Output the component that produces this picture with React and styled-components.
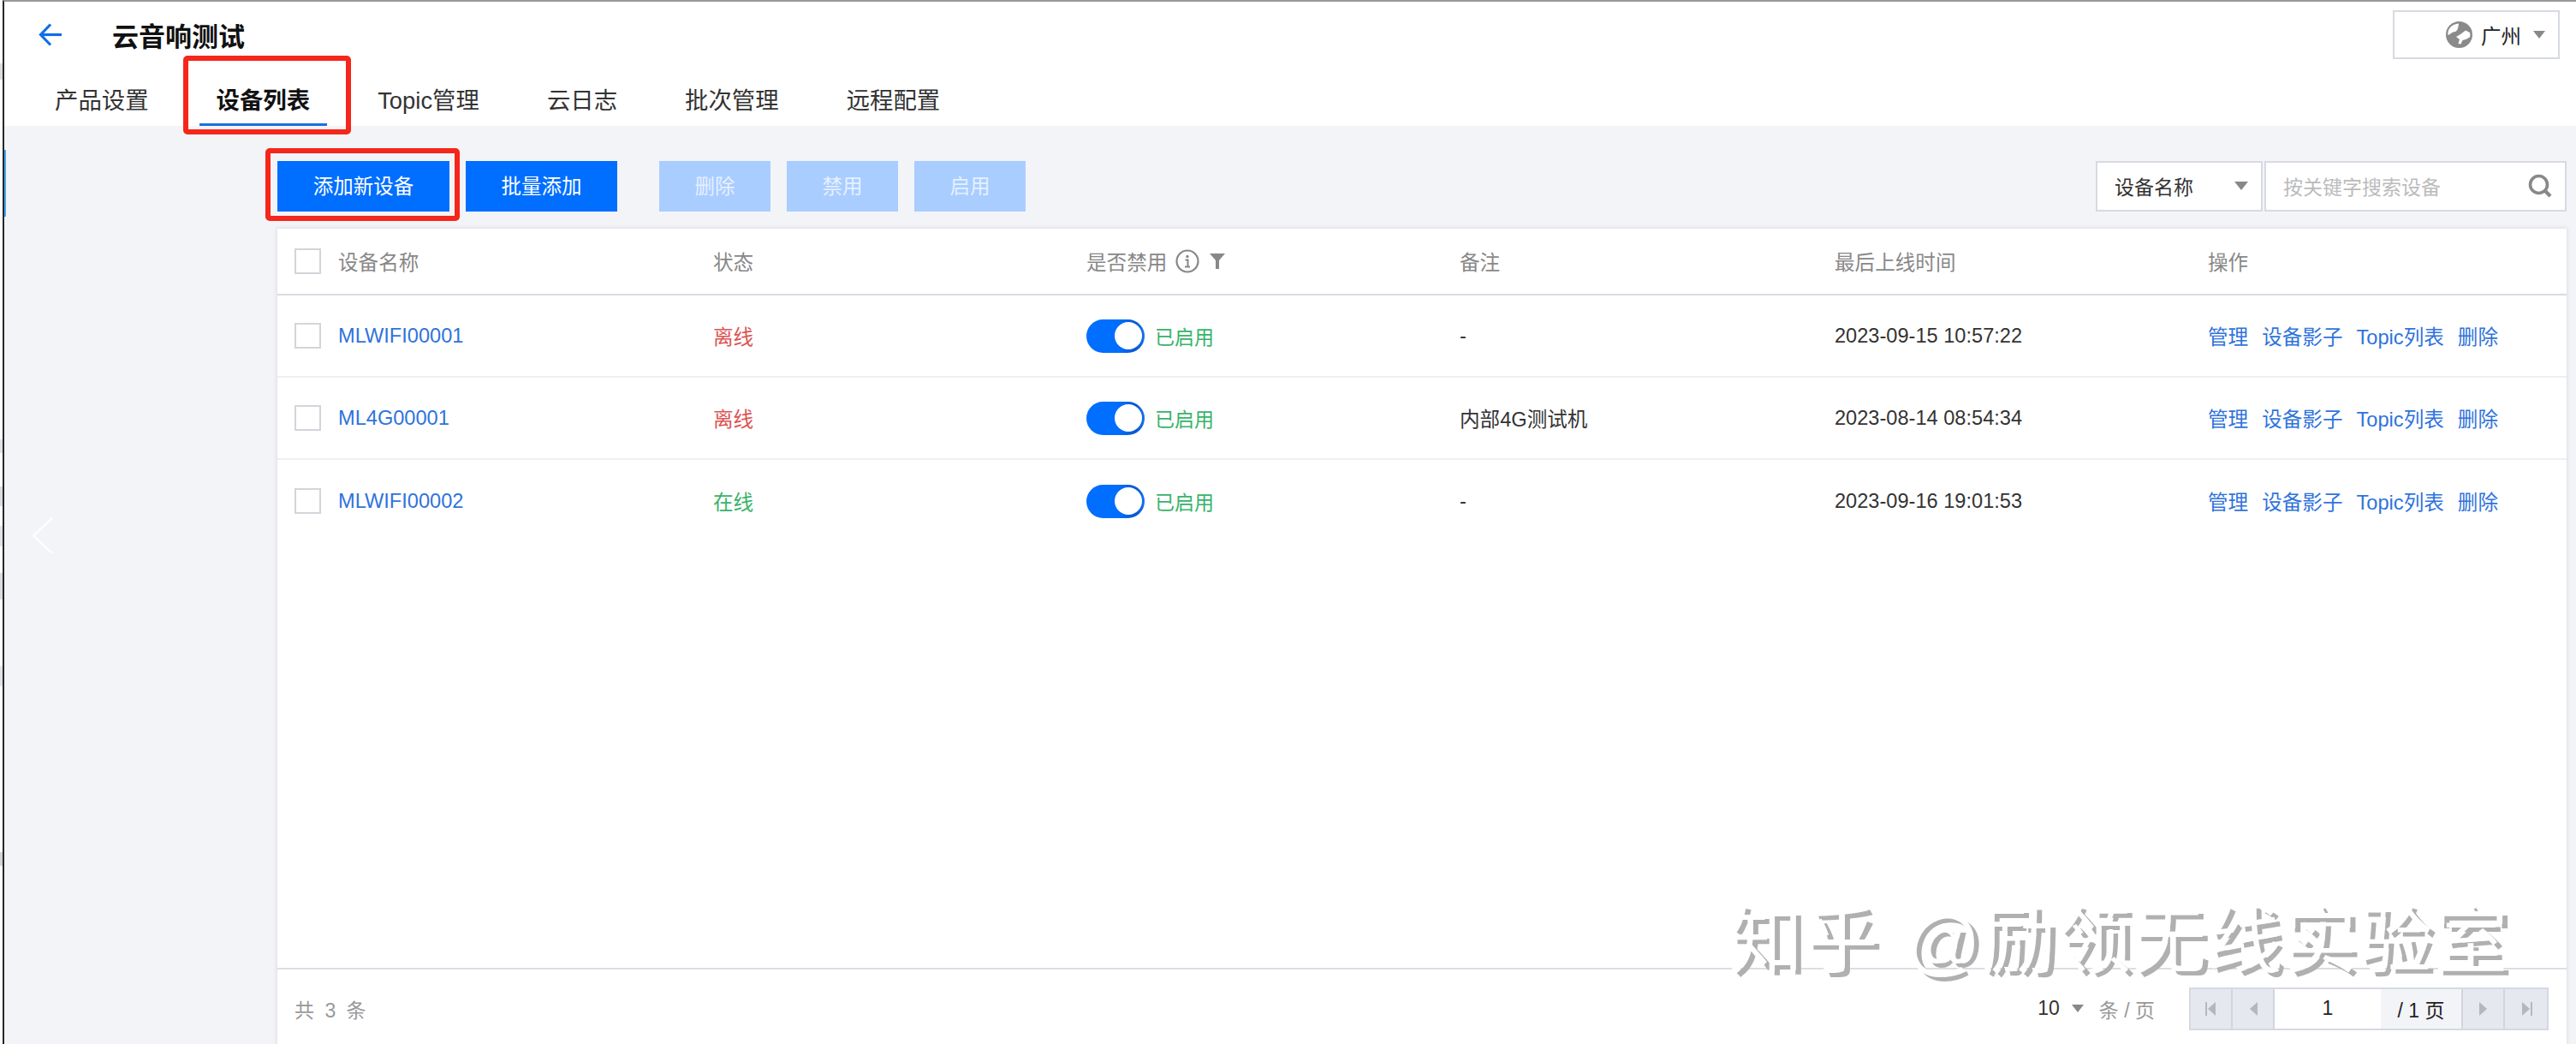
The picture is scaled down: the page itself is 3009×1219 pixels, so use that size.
import React from "react";
import styled, { createGlobalStyle } from "styled-components";

const Global = createGlobalStyle`
  html, body { margin: 0; padding: 0; background: #fff; }
  body { font-family: "Liberation Sans", "Noto Sans CJK SC", sans-serif; color: #222; }
  * { box-sizing: border-box; }
`;

const Page = styled.div`
  position: relative;
  width: 3009px;
  height: 1219px;
  padding-left: 3px;
  overflow: hidden;
  background: linear-gradient(
    180deg,
    #fff 74px, #dcdcdc 74px, #dcdcdc 93px,
    #fff 93px, #fff 513px, #e2e2e2 513px, #e2e2e2 529px,
    #fff 529px, #fff 568px, #dcdcdc 568px, #dcdcdc 591px,
    #fff 591px, #fff 614px, #e2e2e2 614px, #e2e2e2 638px,
    #fff 638px, #fff 669px, #dcdcdc 669px, #dcdcdc 700px,
    #fff 700px, #fff 778px, #e2e2e2 778px, #e2e2e2 801px,
    #fff 801px, #fff 995px, #d4d4d4 995px, #d4d4d4 1011px,
    #fff 1011px
  );
`;
const Frame = styled.div`
  height: 100%;
  display: flex;
  flex-direction: column;
  border-left: 2px solid #26262a;
  border-top: 2px solid #9a9a9a;
  background: #f3f4f8;
`;
const Header = styled.header`
  background: #fff;
  height: 145px;
  display: flex;
  flex-direction: column;
`;
const TopBar = styled.div`
  display: flex;
  align-items: flex-start;
  justify-content: space-between;
  padding: 10px 19px 0 40px;
  height: 82px;
`;
const TitleGroup = styled.div`
  display: flex;
  align-items: center;
  gap: 58px;
  height: 57px;
`;
const Title = styled.h1`
  margin: 6px 0 0;
  font-size: 31px;
  line-height: 40px;
  font-weight: 700;
  color: #111;
`;
const Region = styled.div`
  width: 195px;
  height: 57px;
  border: 2px solid #d7dae1;
  display: flex;
  align-items: center;
  justify-content: flex-end;
  gap: 10px;
  padding-right: 15px;
  font-size: 23.5px;
  color: #222;
`;
const RegionCaret = styled.span`
  width: 0;
  height: 0;
  margin-left: 4px;
  border-left: 7px solid transparent;
  border-right: 7px solid transparent;
  border-top: 9px solid #888;
`;
const Tabs = styled.nav`
  display: flex;
  gap: 39px;
  padding-left: 39px;
  flex: 1;
`;
const Tab = styled.div`
  position: relative;
  padding: 0 20px;
  font-size: 27.4px;
  line-height: 68px;
  white-space: nowrap;
  color: ${(p) => (p.$active ? "#111" : "#333")};
  font-weight: ${(p) => (p.$active ? 700 : 400)};
  border-bottom: 3px solid ${(p) => (p.$active ? "#1a6fe6" : "transparent")};
  height: 63px;
`;
const RedBox = styled.span`
  position: absolute;
  pointer-events: none;
  border: 6px solid #f5261b;
  border-radius: 5px;
`;
const TabMark = styled(RedBox)`
  left: -19px;
  right: -28px;
  top: -19px;
  bottom: -13px;
`;
const Main = styled.main`
  flex: 1;
  min-height: 0;
  display: flex;
  flex-direction: column;
  padding: 41px 11px 0 319px;
`;
const Toolbar = styled.div`
  display: flex;
  justify-content: space-between;
  height: 59px;
  margin-bottom: 20px;
`;
const ButtonRow = styled.div`
  display: flex;
  gap: 19px;
`;
const Button = styled.div`
  position: relative;
  width: ${(p) => p.$w}px;
  height: 59px;
  margin-left: ${(p) => p.$ml || 0}px;
  padding-bottom: 3px;
  display: flex;
  align-items: center;
  justify-content: center;
  font-size: 23.5px;
  background: ${(p) => (p.$disabled ? "#a9cdff" : "#006eff")};
  color: ${(p) => (p.$disabled ? "#e6f0ff" : "#fff")};
`;
const ButtonMark = styled(RedBox)`
  left: -14px;
  right: -12px;
  top: -15px;
  bottom: -11px;
`;
const Search = styled.div`
  display: flex;
  gap: 2px;
`;
const SearchSelect = styled.div`
  width: 195px;
  height: 59px;
  background: #fff;
  border: 2px solid #d7dae1;
  display: flex;
  align-items: center;
  justify-content: space-between;
  padding: 0 15px 2px 20px;
  font-size: 23px;
  color: #333;
`;
const SearchInput = styled.div`
  width: 353px;
  height: 59px;
  background: #fff;
  border: 2px solid #d7dae1;
  display: flex;
  align-items: center;
  justify-content: space-between;
  padding: 0 15px 2px 20px;
  font-size: 23px;
  color: #bbb;
`;
const Caret = styled.span`
  width: 0;
  height: 0;
  border-left: 8px solid transparent;
  border-right: 8px solid transparent;
  border-top: 10px solid #888;
`;
const Card = styled.section`
  flex: 1;
  min-height: 0;
  background: #fff;
  box-shadow: 0 0 4px 1px #dcdde4;
  display: flex;
  flex-direction: column;
`;
const Row = styled.div`
  display: grid;
  grid-template-columns: 489px 436px 436px 438px 436px 1fr;
  align-items: center;
  height: ${(p) => (p.$head ? 78 : 96)}px;
  border-bottom: ${(p) =>
    p.$head ? "2px solid #d9dbe3" : p.$last ? "none" : "2px solid #eeeff3"};
  font-size: 23.6px;
  color: ${(p) => (p.$head ? "#888" : "#333")};
`;
const Cell = styled.div`
  padding-left: 20px;
  display: flex;
  align-items: center;
  white-space: nowrap;
`;
const NameCell = styled(Cell)`
  gap: 20px;
`;
const Check = styled.span`
  width: 31px;
  height: 30px;
  border: 2px solid #d2d5da;
  background: #fff;
`;
const LinkText = styled.span`
  color: #2f73dc;
`;
const Ops = styled(Cell)`
  gap: 16px;
`;
const Status = styled.span`
  color: ${(p) => (p.$on ? "#38b36a" : "#dc5453")};
`;
const Toggle = styled.span`
  width: 68px;
  height: 39px;
  border-radius: 20px;
  background: linear-gradient(90deg, #006eff 55%, #0a58d0 85%, #1672f0);
  display: flex;
  align-items: center;
  justify-content: flex-end;
  padding-right: 3px;
  margin-right: 12px;
`;
const Knob = styled.span`
  width: 32px;
  height: 32px;
  border-radius: 50%;
  background: #fff;
`;
const Enabled = styled.span`
  color: #38b36a;
  font-size: 23px;
`;
const HeadIcons = styled.span`
  display: flex;
  align-items: center;
  margin-left: 10px;
  gap: 12px;
`;
const Body = styled.div`
  flex: 1;
  min-height: 0;
`;
const Footer = styled.footer`
  height: 89px;
  border-top: 2px solid #dcdee4;
  display: flex;
  align-items: center;
  justify-content: space-between;
  padding: 4px 21px 0 20px;
`;
const Total = styled.span`
  font-size: 23px;
  color: #999;
  word-spacing: 6px;
`;
const PagerGroup = styled.div`
  display: flex;
  align-items: center;
`;
const PageSize = styled.div`
  display: flex;
  align-items: center;
  font-size: 23px;
  color: #333;
  margin-right: 40px;
`;
const PageSizeUnit = styled.span`
  color: #999;
  margin-left: 18px;
`;
const PageSizeCaret = styled.span`
  width: 0;
  height: 0;
  margin-left: 14px;
  border-left: 7px solid transparent;
  border-right: 7px solid transparent;
  border-top: 9px solid #888;
`;
const Pager = styled.div`
  display: flex;
  height: 50px;
  border: 2px solid #d6d9e2;
`;
const PagerBtn = styled.div`
  width: 49px;
  background: #e5e8ef;
  border-right: ${(p) => (p.$noBorder ? "none" : "2px solid #d1d5df")};
  display: flex;
  align-items: center;
  justify-content: center;
`;
const PagerInput = styled.div`
  width: 124px;
  background: #fff;
  display: flex;
  align-items: center;
  justify-content: center;
  font-size: 23px;
  color: #222;
`;
const PagerTotal = styled.div`
  width: 96px;
  background: #f2f4f8;
  border-right: 2px solid #d1d5df;
  display: flex;
  align-items: center;
  justify-content: center;
  font-size: 23px;
  color: #222;
`;
const CollapseHandle = styled.svg`
  position: absolute;
  left: 37px;
  top: 604px;
`;
const BlueMark = styled.span`
  position: absolute;
  left: 5px;
  top: 175px;
  width: 2px;
  height: 78px;
  background: #46a8ee;
`;
const Watermark = styled.div`
  position: absolute;
  right: 78px;
  bottom: 70px;
  font-size: 86px;
  line-height: 100px;
  white-space: nowrap;
  color: #fff;
  letter-spacing: 2px;
  word-spacing: 4px;
  text-shadow: 6px 5px 0 #b0b0b0;
  pointer-events: none;
`;

const BackArrow = () => (
  <svg width="28" height="27" viewBox="0 0 28 27" fill="none" stroke="#0f6fe8" strokeWidth="3.2">
    <path d="M27 13.5H3" />
    <path d="M14 1.5L2.5 13.5L14 25.5" />
  </svg>
);
const Globe = () => (
  <svg width="31" height="31" viewBox="0 0 31 31">
    <circle cx="15.5" cy="15.5" r="15.5" fill="#8a8a8a" />
    <path fill="#fff" d="M2.5 16c3-1 5-4 8-4 1.5 0 3-2 3.5-4 .5-2 1-4 1-5.5-5 .3-10 3-12 8-.5 2-.8 3.5-.5 5.500zM17 15l6-4.5 5 2.5c.5 2 .5 4 0 5.5-2 0-3 2.5-5 2.5l-3.5 1-2 4.5-3-.5 1.5-5-4-3z" />
  </svg>
);
const InfoIcon = () => (
  <svg width="28" height="28" viewBox="0 0 28 28" fill="none">
    <circle cx="14" cy="14" r="12.5" stroke="#888" strokeWidth="2.2" />
    <circle cx="14" cy="8.5" r="1.7" fill="#888" />
    <path d="M11.500 12.500h3v8M11 20.500h6" stroke="#888" strokeWidth="2" />
  </svg>
);
const Funnel = () => (
  <svg width="18" height="18" viewBox="0 0 18 18">
    <path fill="#888" d="M0 0H18L11 8V18H7V8Z" />
  </svg>
);
const SearchIcon = () => (
  <svg width="28" height="28" viewBox="0 0 28 28" fill="none" stroke="#888">
    <circle cx="12.5" cy="12.5" r="10" strokeWidth="3.6" />
    <path d="M19.5 19.5L26 26" strokeWidth="4.2" />
  </svg>
);
const PagerIcon = ({ dir, bar }) => (
  <svg width="16" height="20" viewBox="0 0 16 20" fill="#b3b7c0">
    {dir === "left" ? <path d="M13 2V18L4 10Z" /> : <path d="M3 2V18L12 10Z" />}
    {bar && <rect x={dir === "left" ? 1 : 13} y="2" width="2" height="16" />}
  </svg>
);

const DEVICES = [
  { name: "MLWIFI00001", on: false, note: "-", time: "2023-09-15 10:57:22" },
  { name: "ML4G00001", on: false, note: "内部4G测试机", time: "2023-08-14 08:54:34" },
  { name: "MLWIFI00002", on: true, note: "-", time: "2023-09-16 19:01:53" },
];
const TABS = ["产品设置", "设备列表", "Topic管理", "云日志", "批次管理", "远程配置"];

export default function App() {
  return (
    <Page>
      <Global />
      <Frame>
        <Header>
          <TopBar>
            <TitleGroup>
              <BackArrow />
              <Title>云音响测试</Title>
            </TitleGroup>
            <Region>
              <Globe />
              <span>广州</span>
              <RegionCaret />
            </Region>
          </TopBar>
          <Tabs>
            {TABS.map((t, i) => (
              <Tab key={t} $active={i === 1}>
                {t}
                {i === 1 && <TabMark />}
              </Tab>
            ))}
          </Tabs>
        </Header>
        <Main>
          <Toolbar>
            <ButtonRow>
              <Button $w={201}>
                添加新设备
                <ButtonMark />
              </Button>
              <Button $w={177}>批量添加</Button>
              <Button $w={130} $ml={30} $disabled>删除</Button>
              <Button $w={130} $disabled>禁用</Button>
              <Button $w={130} $disabled>启用</Button>
            </ButtonRow>
            <Search>
              <SearchSelect>
                <span>设备名称</span>
                <Caret />
              </SearchSelect>
              <SearchInput>
                <span>按关键字搜索设备</span>
                <SearchIcon />
              </SearchInput>
            </Search>
          </Toolbar>
          <Card>
            <Row $head>
              <NameCell><Check /><span>设备名称</span></NameCell>
              <Cell>状态</Cell>
              <Cell>
                是否禁用
                <HeadIcons><InfoIcon /><Funnel /></HeadIcons>
              </Cell>
              <Cell>备注</Cell>
              <Cell>最后上线时间</Cell>
              <Cell>操作</Cell>
            </Row>
            <Body>
              {DEVICES.map((d, i) => (
                <Row key={d.name} $last={i === DEVICES.length - 1}>
                  <NameCell><Check /><LinkText>{d.name}</LinkText></NameCell>
                  <Cell><Status $on={d.on}>{d.on ? "在线" : "离线"}</Status></Cell>
                  <Cell>
                    <Toggle><Knob /></Toggle>
                    <Enabled>已启用</Enabled>
                  </Cell>
                  <Cell>{d.note}</Cell>
                  <Cell>{d.time}</Cell>
                  <Ops>
                    <LinkText>管理</LinkText>
                    <LinkText>设备影子</LinkText>
                    <LinkText>Topic列表</LinkText>
                    <LinkText>删除</LinkText>
                  </Ops>
                </Row>
              ))}
            </Body>
            <Footer>
              <Total>共 3 条</Total>
              <PagerGroup>
                <PageSize>
                  10
                  <PageSizeCaret />
                  <PageSizeUnit>条 / 页</PageSizeUnit>
                </PageSize>
                <Pager>
                  <PagerBtn><PagerIcon dir="left" bar /></PagerBtn>
                  <PagerBtn><PagerIcon dir="left" /></PagerBtn>
                  <PagerInput>1</PagerInput>
                  <PagerTotal>/ 1 页</PagerTotal>
                  <PagerBtn><PagerIcon dir="right" /></PagerBtn>
                  <PagerBtn $noBorder><PagerIcon dir="right" bar /></PagerBtn>
                </Pager>
              </PagerGroup>
            </Footer>
          </Card>
        </Main>
      </Frame>
      <BlueMark />
      <CollapseHandle width="25" height="43" viewBox="0 0 25 43" fill="none" stroke="#fff" strokeWidth="2.2">
        <path d="M24 1L2 21.5L24 42" />
      </CollapseHandle>
      <Watermark>知乎 @励领无线实验室</Watermark>
    </Page>
  );
}
